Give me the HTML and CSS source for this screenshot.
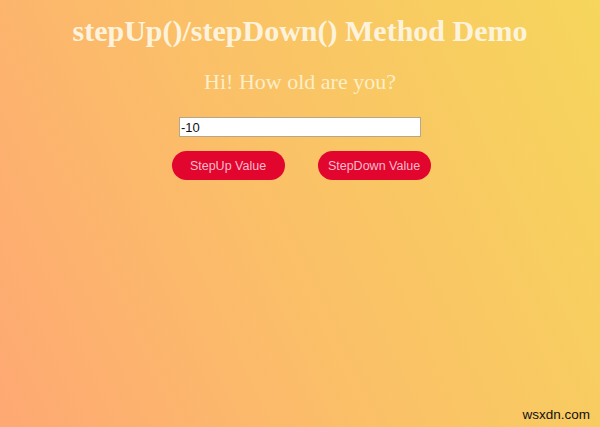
FILE: index.html
```html
<!DOCTYPE html>
<html>
<head>
<meta charset="utf-8">
<link rel="stylesheet" href="styles.css">
</head>
<body>
<main class="page">
  <h1 class="title">stepUp()/stepDown() Method Demo</h1>
  <p class="question">Hi! How old are you?</p>
  <input class="age" type="text" value="-10">
  <div class="actions">
    <button class="btn">StepUp Value</button>
    <button class="btn">StepDown Value</button>
  </div>
</main>
<div class="watermark">wsxdn.com</div>
</body>
</html>
```

FILE: styles.css
```css
html, body {
  margin: 0;
  padding: 0;
  height: 100%;
}
body {
  background: linear-gradient(65deg, #fea873 0%, #fbbf68 45%, #f6d65c 100%);
  font-family: "Liberation Serif", "Times New Roman", serif;
  color: #fdf3d6;
  position: relative;
  overflow: hidden;
}
.page {
  display: flex;
  flex-direction: column;
  align-items: center;
  padding-top: 13px;
}
.title {
  margin: 0;
  font-size: 30px;
  font-weight: bold;
  line-height: 36px;
  color: #fdf3dc;
}
.question {
  margin: 19px 0 0;
  font-size: 22px;
  line-height: 28px;
  color: #fbefc8;
}
.age {
  margin-top: 21px;
  width: 242px;
  height: 20px;
  box-sizing: border-box;
  border: 1px solid #b9a58a;
  padding: 0 1px;
  font-family: "Liberation Sans", Arial, sans-serif;
  font-size: 13px;
  color: #111;
  background: #fff;
  outline: none;
}
.actions {
  display: flex;
  gap: 33px;
  margin-top: 14px;
  padding-left: 2px;
}
.btn {
  width: 113px;
  height: 29px;
  border: none;
  border-radius: 15px;
  background: #e2052e;
  color: #f7bccb;
  font-family: "Liberation Sans", Arial, sans-serif;
  font-size: 12.5px;
  padding: 0;
}
.watermark {
  position: absolute;
  right: 10px;
  bottom: 5px;
  font-family: "Liberation Sans", Arial, sans-serif;
  font-size: 13.5px;
  color: #111;
}
```
